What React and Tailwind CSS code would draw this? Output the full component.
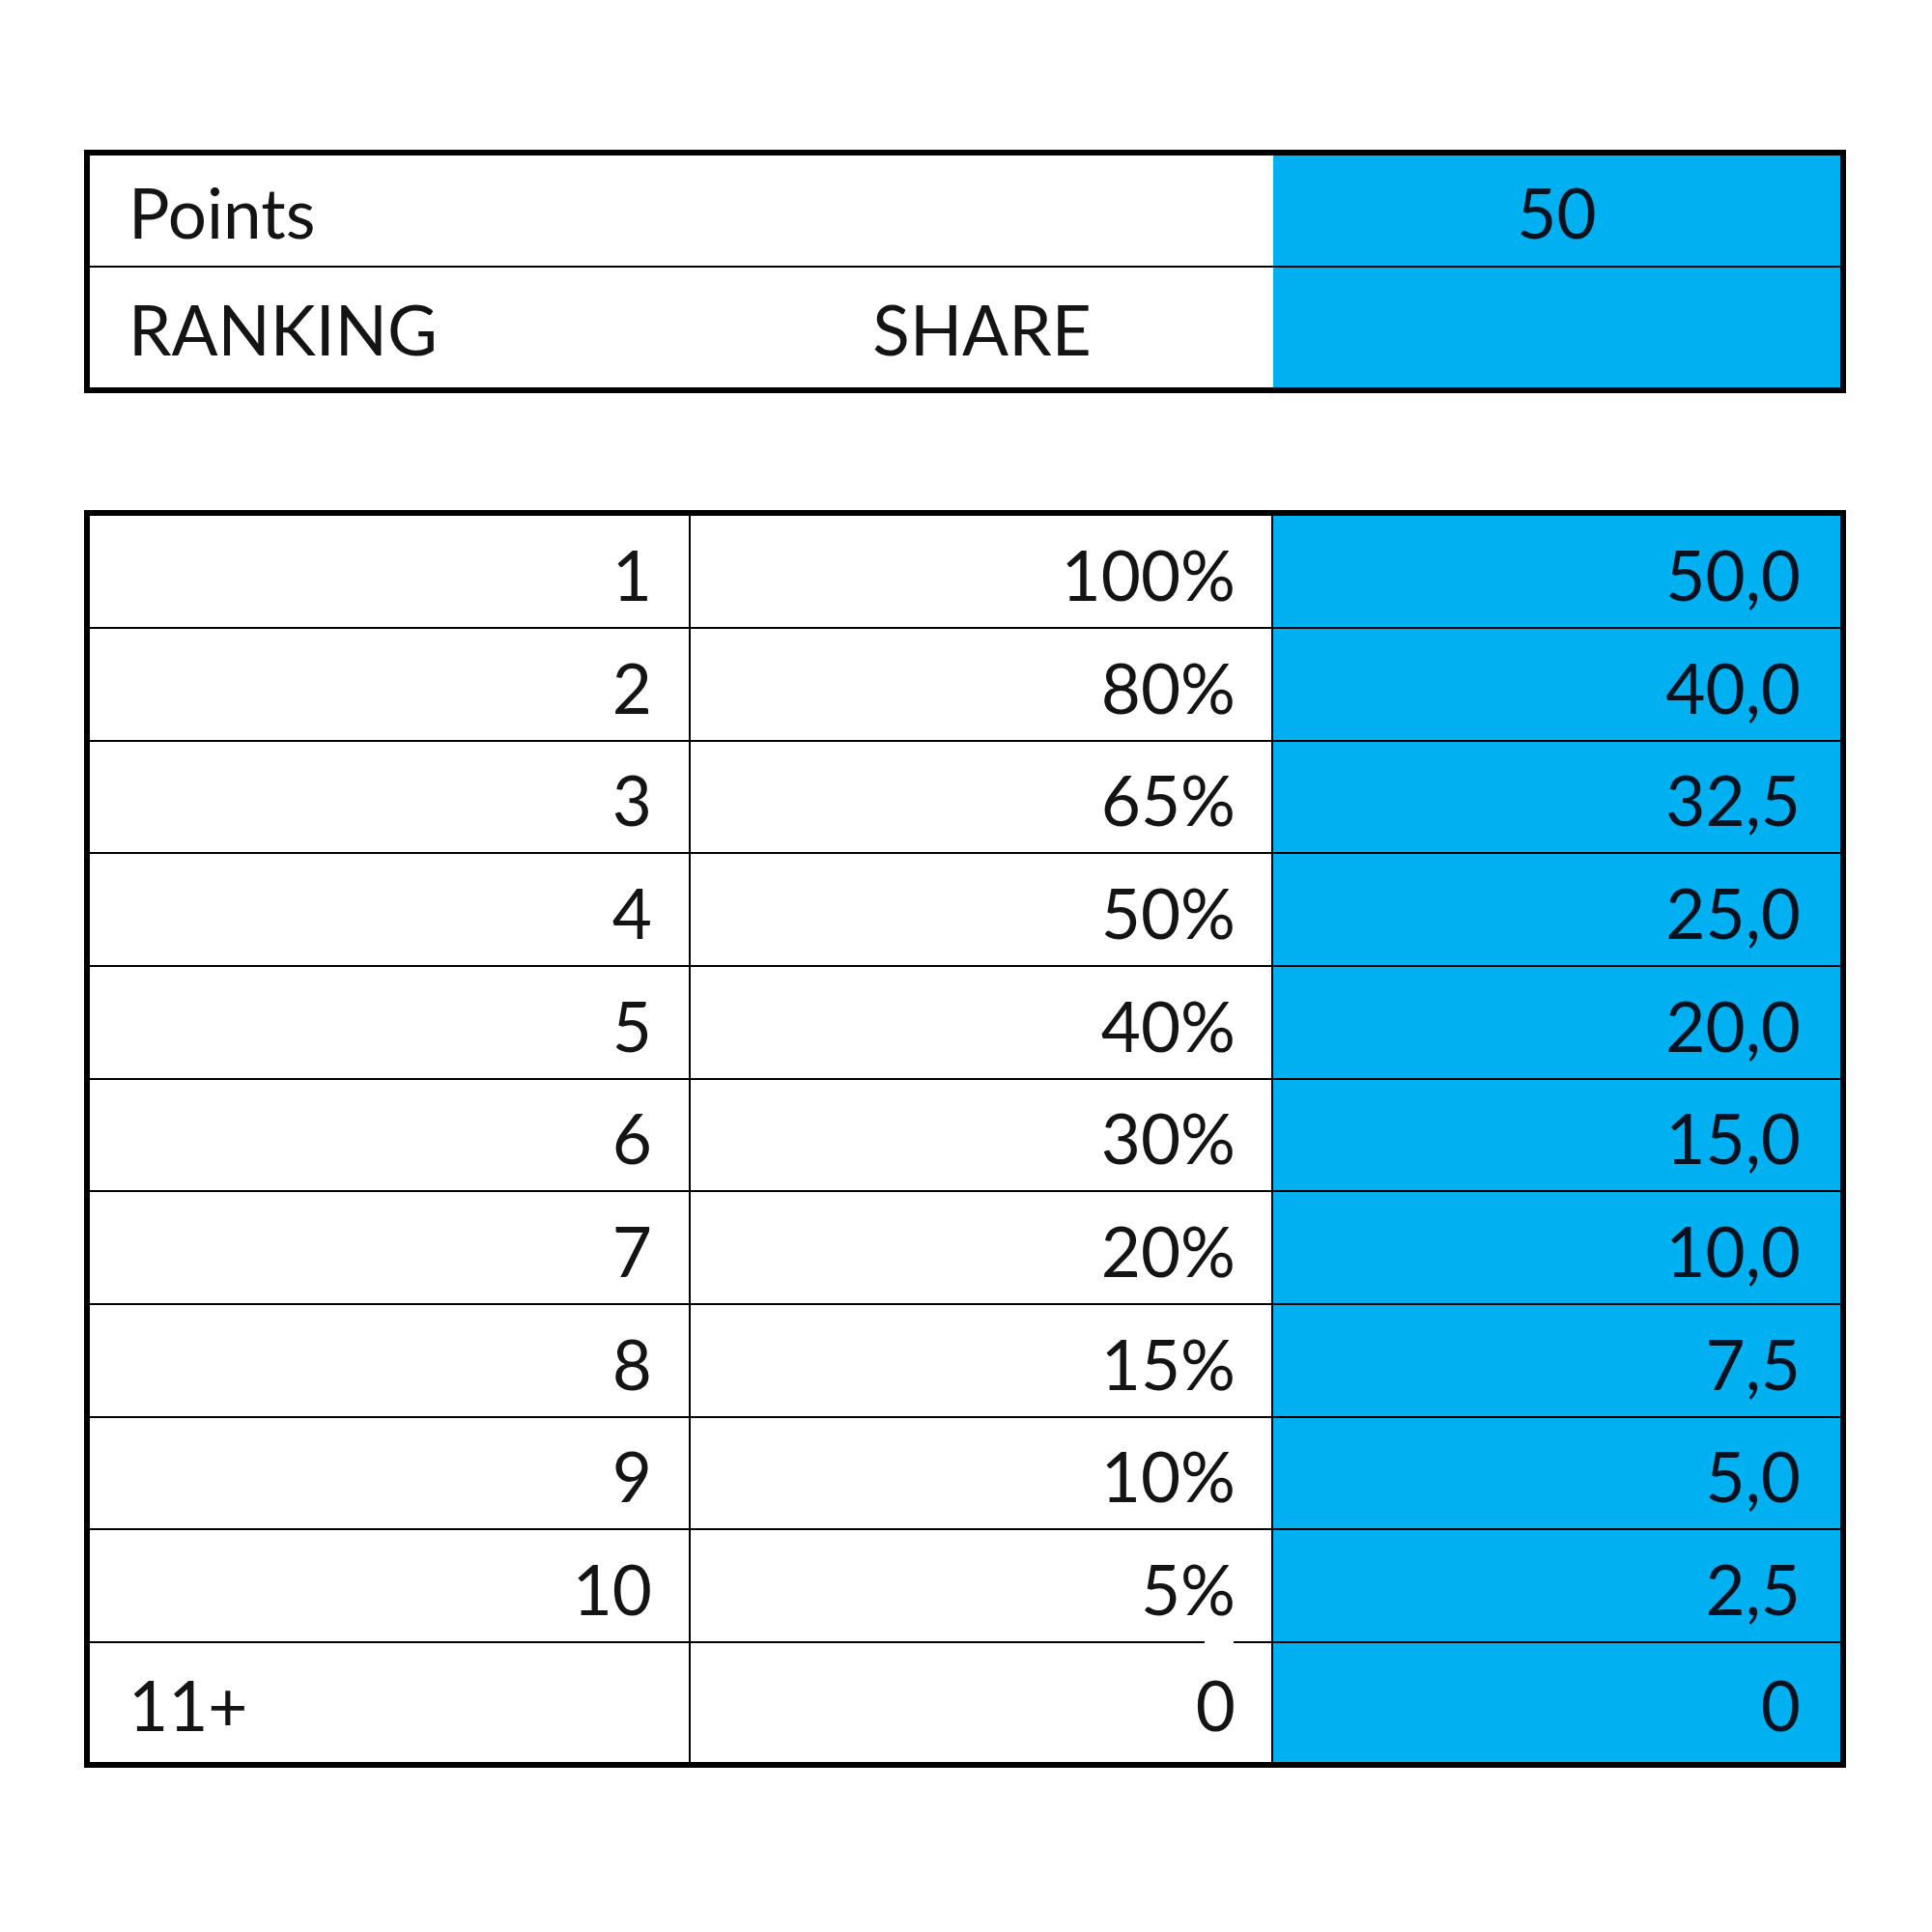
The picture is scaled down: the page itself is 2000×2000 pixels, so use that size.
const rows = [
  { rank: '1', share: '100%', pts: '50,0' },
  { rank: '2', share: '80%', pts: '40,0' },
  { rank: '3', share: '65%', pts: '32,5' },
  { rank: '4', share: '50%', pts: '25,0' },
  { rank: '5', share: '40%', pts: '20,0' },
  { rank: '6', share: '30%', pts: '15,0' },
  { rank: '7', share: '20%', pts: '10,0' },
  { rank: '8', share: '15%', pts: '7,5' },
  { rank: '9', share: '10%', pts: '5,0' },
  { rank: '10', share: '5%', pts: '2,5' },
]

function ShareRow({ rank, share, pts, first, gap }) {
  return (
    <div className={`flex border-b-2 border-black ${first ? 'h-[117px]' : 'h-[116.67px]'}`}>
      <div className="w-[622px] shrink-0 border-r-2 border-black flex items-end justify-end pr-[38px] pb-[19px]">
        {rank}
      </div>
      <div className="relative w-[603px] shrink-0 border-r-2 border-black flex items-end justify-end pr-[37px] pb-[19px]">
        {share}
        {gap && <span className="absolute right-[39px] -bottom-[2px] w-[30px] h-[2px] bg-white" />}
      </div>
      <div className="flex-1 bg-[#00b0f0] text-[#06121f] flex items-end justify-end pr-[41px] pb-[19px]">
        {pts}
      </div>
    </div>
  )
}

export default function App() {
  return (
    <div className="min-h-screen bg-white pl-[87px] pt-[155px] font-[Lato,sans-serif] text-[71px] leading-none text-[#141414]">
      <div className="w-[1824px] border-[6px] border-black">
        <div className="flex h-[116px] border-b-2 border-black">
          <div className="w-[1225px] shrink-0 flex items-end pl-[40px] pb-[20px]">Points</div>
          <div className="flex-1 bg-[#00b0f0] text-[#06121f] flex items-end justify-center pb-[20px]">50</div>
        </div>
        <div className="flex h-[124px]">
          <div className="w-[622px] shrink-0 flex items-end pl-[40px] pb-[25px]">RANKING</div>
          <div className="w-[603px] shrink-0 flex items-end justify-center pb-[25px]">SHARE</div>
          <div className="flex-1 bg-[#00b0f0]" />
        </div>
      </div>

      <div className="mt-[121px] w-[1824px] border-[6px] border-black">
        {rows.map((r, i) => (
          <ShareRow key={r.rank} {...r} first={i === 0} gap={i === rows.length - 1} />
        ))}
        <div className="flex h-[123px]">
          <div className="w-[622px] shrink-0 border-r-2 border-black flex items-end pl-[40px] pb-[24px]">11+</div>
          <div className="w-[603px] shrink-0 border-r-2 border-black flex items-end justify-end pr-[37px] pb-[24px]">0</div>
          <div className="flex-1 bg-[#00b0f0] text-[#06121f] flex items-end justify-end pr-[41px] pb-[24px]">0</div>
        </div>
      </div>
    </div>
  )
}
